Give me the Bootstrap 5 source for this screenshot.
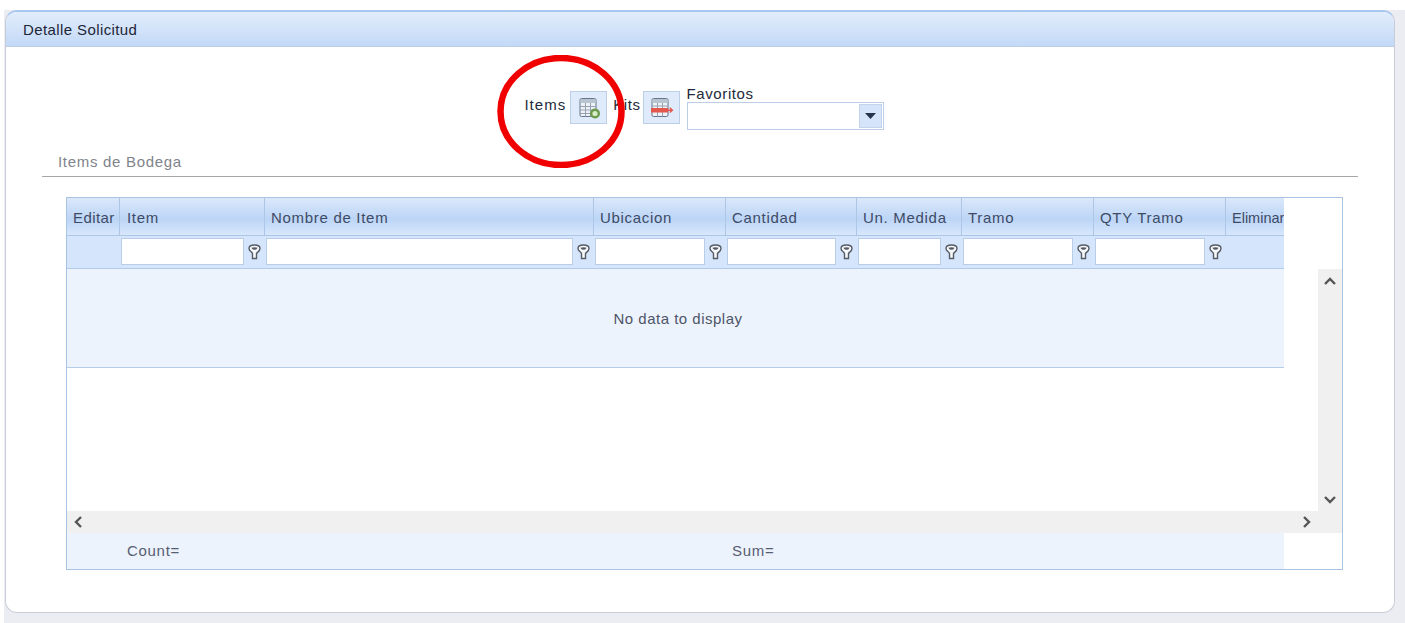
<!DOCTYPE html>
<html lang="es">
<head>
    <meta charset="UTF-8">
    <title>Detalle Solicitud</title>
    <link href="https://cdn.jsdelivr.net/npm/bootstrap@5.3.3/dist/css/bootstrap.min.css" rel="stylesheet">
    <style>
        body {
            width: 1405px;
            height: 623px;
            overflow: hidden;
            background: linear-gradient(to right, #fff 4px, #ecedf2 4px);
            font-family: "Liberation Sans", Arial, sans-serif;
            font-size: 15px;
            letter-spacing: .7px;
            color: #3d4b66;
            position: relative;
        }
        .page-top { height: 10px; background: #fff; margin-left: -4px; }
        .panel-box {
            width: 1390px;
            height: 603px;
            margin-left: 5px;
            background: #fff;
            border: 1px solid #c9cdd8;
            border-top: 2px solid #a9c7f0;
            border-radius: 12px;
            overflow: hidden;
        }
        .panel-head {
            height: 35px;
            padding: 3px 0 0 17px;
            background: linear-gradient(to bottom, #e2edfc, #c3d9f7);
            border-bottom: 1px solid #bccde6;
            color: #1d2638;
            letter-spacing: .4px;
        }
        .tool-row { height: 84px; padding: 38px 0 0 8px; color: #232a3a; letter-spacing: .6px; }
        .tool-label { margin-top: 9px; }
        .tool-label-wide { letter-spacing: 1px; }
        .tool-btn {
            width: 37px;
            height: 33px;
            margin-top: 6px;
            background: #dfebfb;
            border: 1px solid #bdcfe8;
        }
        .tool-gap { margin-left: 6px; }
        .tool-gap-sm { margin-left: 2px; }
        .combo-wrap { width: 197px; margin-left: 7px; padding-top: 1px; line-height: 16px; }
        .combo-box {
            height: 28px;
            border: 1px solid #bdcfe8;
            background: #fff;
            padding: 1px;
        }
        .combo-arrow {
            width: 23px;
            background: #d5e4f8;
            border: 1px solid #c3d3ea;
        }
        .section-title {
            height: 46px;
            margin: 0 36px 20px 36px;
            padding: 21px 0 0 16px;
            border-bottom: 1px solid #a5a7ab;
            color: #80848c;
            line-height: 20px;
        }
        .grid-box {
            width: 1277px;
            height: 373px;
            margin-left: 60px;
            border: 1px solid #a9c3e2;
            overflow: hidden;
        }
        .grid-row { width: 1217px; }
        .cell-1 { width: 53px; }
        .cell-2 { width: 145px; }
        .cell-3 { width: 329px; }
        .cell-4 { width: 132px; }
        .cell-5 { width: 131px; }
        .cell-6 { width: 105px; }
        .cell-7 { width: 132px; }
        .cell-8 { width: 132px; }
        .cell-9 { width: 58px; }
        .head-row {
            height: 38px;
            background: linear-gradient(to bottom, #dbe8fb, #bcd5f6 55%, #d9e8fc);
        }
        .head-cell {
            padding-left: 6px;
            line-height: 40px;
            white-space: nowrap;
            overflow: hidden;
            border-right: 1px solid #adc6e6;
            border-bottom: 1px solid #adc6e6;
            flex: none;
        }
        .head-cell.cell-2 { padding-left: 7px; }
        .head-cell:last-child { border-right: 0; letter-spacing: 0; font-size: 14.500px; }
        .head-cell:first-child { letter-spacing: .4px; }
        .filter-row {
            height: 33px;
            background: #d5e5fc;
            border-bottom: 1px solid #b2cbe9;
        }
        .filter-blank { flex: none; }
        .filter-cell { height: 32px; padding: 2px 0 3px 1px; flex: none; }
        .filter-input {
            flex: 1;
            min-width: 0;
            height: 27px;
            background: #fff;
            border: 1px solid #b8cde8;
        }
        .filter-icon { width: 21px; flex: none; }
        .body-area { height: 242px; }
        .empty-row {
            height: 99px;
            padding: 3px 0 0 5px;
            background: #edf3fd;
            border-bottom: 1px solid #b7cce8;
            color: #4d5568;
            letter-spacing: .5px;
        }
        .v-scroll { width: 24px; margin-left: 34px; background: #f0f0f0; padding: 8px 0 7px; }
        .h-scroll { height: 22px; background: #f0f0f0; padding: 0 31px 0 7px; }
        .foot-row { height: 36px; background: #edf3fd; line-height: 36px; color: #565e72; }
        .foot-cell { padding-left: 7px; flex: none; }
        .foot-cell.cell-5 { padding-left: 6px; }
        .mark-ring { position: absolute; left: 497px; top: 55px; }
    </style>
</head>
<body>
<div class="page-top"></div>
<div class="panel-box">
    <div class="panel-head d-flex align-items-center">Detalle Solicitud</div>

    <div class="tool-row d-flex justify-content-center">
        <span class="tool-label tool-label-wide">Items</span>
        <div class="tool-btn d-flex align-items-center justify-content-center ms-1">
            <svg width="24" height="22" viewBox="0 0 24 22">
                <rect x="3" y="1.500" width="16" height="18" rx="1.500" fill="#eef2f6" stroke="#66758a"/>
                <rect x="3.500" y="2" width="15" height="4" fill="#b9c4d2"/>
                <path d="M3 9.500h16M3 13h16M3 16.500h16M8.500 6v13.500M13.500 6v13.500" stroke="#94a2b3" fill="none"/>
                <circle cx="18" cy="16.500" r="5" fill="#6c9a4c"/>
                <circle cx="18" cy="16.500" r="2.600" fill="#d9ecc8"/>
            </svg>
        </div>
        <span class="tool-label tool-gap">Kits</span>
        <div class="tool-btn d-flex align-items-center justify-content-center tool-gap-sm">
            <svg width="26" height="22" viewBox="0 0 26 22">
                <rect x="4" y="1.500" width="16" height="18" rx="1.500" fill="#eef2f6" stroke="#66758a"/>
                <rect x="4.500" y="2" width="15" height="4" fill="#b9c4d2"/>
                <path d="M4 9h16M9.500 6v13.500M14.500 6v13.500" stroke="#94a2b3" fill="none"/>
                <rect x="3" y="11" width="17" height="4.500" fill="#e4574c"/>
                <path d="M20 13.200h4M21.800 10.800l2.600 2.400-2.600 2.400" stroke="#e4574c" stroke-width="1.400" fill="none"/>
            </svg>
        </div>
        <div class="combo-wrap">
            <div>Favoritos</div>
            <div class="combo-box d-flex justify-content-end">
                <div class="combo-arrow d-flex align-items-center justify-content-center">
                    <svg width="11" height="6" viewBox="0 0 11 6"><path d="M0 0h11L5.500 6z" fill="#27344d"/></svg>
                </div>
            </div>
        </div>
    </div>

    <div class="section-title">Items de Bodega</div>

    <div class="grid-box">
        <div class="grid-row head-row d-flex">
            <div class="head-cell cell-1">Editar</div>
            <div class="head-cell cell-2">Item</div>
            <div class="head-cell cell-3">Nombre de Item</div>
            <div class="head-cell cell-4">Ubicacion</div>
            <div class="head-cell cell-5">Cantidad</div>
            <div class="head-cell cell-6">Un. Medida</div>
            <div class="head-cell cell-7">Tramo</div>
            <div class="head-cell cell-8">QTY Tramo</div>
            <div class="head-cell cell-9">Eliminar</div>
        </div>
        <div class="grid-row filter-row d-flex" id="filters"></div>
        <div class="body-area d-flex">
            <div class="grid-row">
                <div class="empty-row d-flex align-items-center justify-content-center">No data to display</div>
            </div>
            <div class="v-scroll d-flex flex-column justify-content-between align-items-center">
                <svg width="14" height="9" viewBox="0 0 14 9"><path d="M2 7l5-5 5 5" fill="none" stroke="#555" stroke-width="2.400"/></svg>
                <svg width="14" height="9" viewBox="0 0 14 9"><path d="M2 2l5 5 5-5" fill="none" stroke="#555" stroke-width="2.400"/></svg>
            </div>
        </div>
        <div class="h-scroll d-flex align-items-center justify-content-between">
            <svg width="9" height="14" viewBox="0 0 9 14"><path d="M7 2L2 7l5 5" fill="none" stroke="#555" stroke-width="2.400"/></svg>
            <svg width="9" height="14" viewBox="0 0 9 14"><path d="M2 2l5 5-5 5" fill="none" stroke="#555" stroke-width="2.400"/></svg>
        </div>
        <div class="grid-row foot-row d-flex">
            <div class="foot-cell cell-1"></div>
            <div class="foot-cell cell-2">Count=</div>
            <div class="foot-cell cell-3"></div>
            <div class="foot-cell cell-4"></div>
            <div class="foot-cell cell-5">Sum=</div>
        </div>
    </div>
</div>

<svg class="mark-ring" width="128" height="113" viewBox="0 0 128 113">
    <ellipse cx="64" cy="56.500" rx="60.500" ry="53.500" fill="none" stroke="#f00000" stroke-width="6.500"/>
</svg>

<script>
    // filter row repeats the same cell for cols 2-8
    const filters = document.getElementById("filters");
    const icon = '<svg width="13" height="16" viewBox="0 0 13 16"><path d="M1 4.500C1 2 3.500 1 6.500 1s5.500 1 5.500 3.500c0 2.500-2.500 3.500-3.500 5v5h-4v-5C4 8 1 7 1 4.500z" fill="#f7f8fa" stroke="#555c66" stroke-width="1.400"/><path d="M3.500 3.800c1.500-.8 4.500-.8 6 0-.6 1.400-1.500 2-3 2s-2.400-.6-3-2z" fill="#555c66"/></svg>';
    let html = '<div class="filter-blank cell-1"></div>';
    for (let i = 2; i <= 8; i++) {
        html += '<div class="filter-cell cell-' + i + ' d-flex align-items-center"><div class="filter-input"></div>' +
            '<div class="filter-icon d-flex justify-content-center">' + icon + '</div></div>';
    }
    filters.innerHTML = html;
</script>
<script src="https://cdn.jsdelivr.net/npm/bootstrap@5.3.3/dist/js/bootstrap.bundle.min.js"></script>
</body>
</html>
